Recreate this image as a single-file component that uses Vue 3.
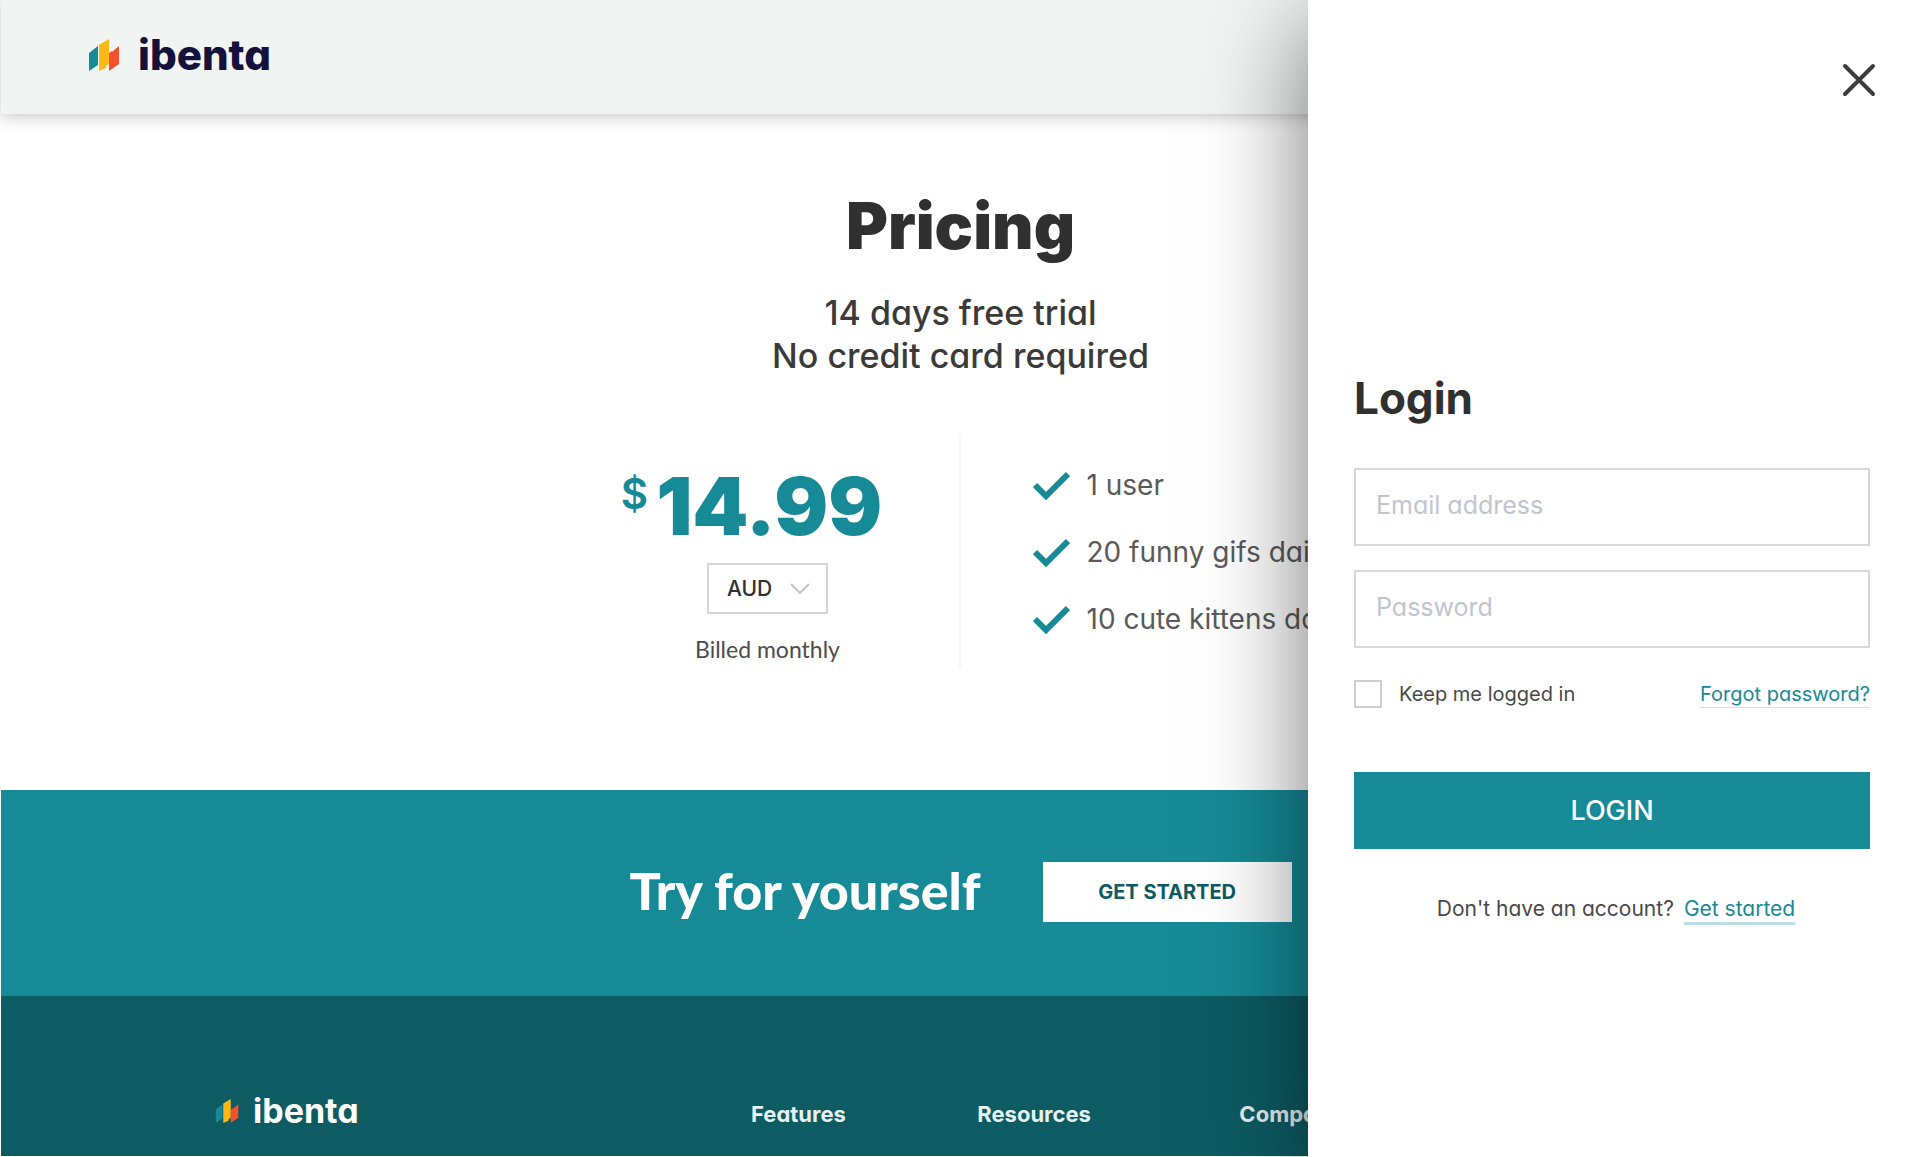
<script setup>
import { ref } from 'vue'

const email = ref('')
const password = ref('')
const keep = ref(false)
const currency = ref('AUD')
const features = ['1 user', '20 funny gifs daily', '10 cute kittens daily']
const footerLinks = ['Features', 'Resources', 'Company']
</script>

<template>
  <div class="shell">
    <div class="page">
      <header class="header">
        <a class="brand" href="#">
          <svg class="mark" viewBox="0 0 32 32" aria-hidden="true">
            <path d="M1 14 10 7v19l-9 6z" fill="#168a96" />
            <path d="M11 6 21 0v25l-3 2v2l-7 3z" fill="#fdb913" />
            <path d="M21 14l3-2v1l7-6v18l-10 7z" fill="#f4512c" />
          </svg>
          <span class="wordmark">ibenta</span>
        </a>
      </header>

      <main class="pricing">
        <h1>Pricing</h1>
        <p class="lead">14 days free trial<br />No credit card required</p>
        <div class="plan">
          <div class="cost">
            <div class="price"><span class="sign">$</span><span class="amount">14.99</span></div>
            <div class="currency">
              <select v-model="currency" aria-label="Currency">
                <option>AUD</option>
                <option>USD</option>
                <option>EUR</option>
              </select>
              <svg class="chevron" viewBox="0 0 20 12" aria-hidden="true">
                <path d="m1 1 9 9 9-9" fill="none" stroke="#c4c4c4" stroke-width="2" />
              </svg>
            </div>
            <p class="billed">Billed monthly</p>
          </div>
          <ul class="features">
            <li v-for="item in features" :key="item">
              <svg class="check" viewBox="0 0 37 29" aria-hidden="true">
                <path d="M2 14 13 25 35 3" fill="none" stroke="#168a96" stroke-width="6" />
              </svg>
              <span>{{ item }}</span>
            </li>
          </ul>
        </div>
      </main>

      <section class="cta">
        <h2>Try for yourself</h2>
        <button type="button">GET STARTED</button>
      </section>

      <footer class="footer">
        <a class="brand small" href="#">
          <svg class="mark" viewBox="0 0 32 32" aria-hidden="true">
            <path d="M1 14 10 7v19l-9 6z" fill="#168a96" />
            <path d="M11 6 21 0v25l-3 2v2l-7 3z" fill="#fdb913" />
            <path d="M21 14l3-2v1l7-6v18l-10 7z" fill="#f4512c" />
          </svg>
          <span class="wordmark">ibenta</span>
        </a>
        <a v-for="link in footerLinks" :key="link" class="footer-link" href="#">{{ link }}</a>
      </footer>
    </div>

    <aside class="panel">
      <button class="close" type="button" aria-label="Close">
        <svg viewBox="0 0 34 34" aria-hidden="true">
          <path d="M3 3 31 31M31 3 3 31" fill="none" stroke="#3c3c40" stroke-width="4" stroke-linecap="round" />
        </svg>
      </button>
      <form class="login" @submit.prevent>
        <h2>Login</h2>
        <input v-model="email" class="field" type="email" placeholder="Email address" aria-label="Email address" />
        <input v-model="password" class="field" type="password" placeholder="Password" aria-label="Password" />
        <div class="options">
          <label><input v-model="keep" type="checkbox" />Keep me logged in</label>
          <a class="forgot" href="#">Forgot password?</a>
        </div>
        <button class="submit" type="submit">LOGIN</button>
        <p class="signup">Don't have an account? <a href="#">Get started</a></p>
      </form>
    </aside>
  </div>
</template>

<style>
body {
  margin: 0;
  background: #fff;
}
</style>

<style scoped>
.shell {
  position: relative;
  display: flex;
  box-sizing: border-box;
  min-height: 100vh;
  padding: 0 0 1px 1px;
  overflow: hidden;
  color: #303030;
  font-family: Inter, "Liberation Sans", sans-serif;
  font-feature-settings: "cv11";
}
.shell * {
  box-sizing: border-box;
}
.page {
  display: flex;
  flex: 1;
  flex-direction: column;
  min-width: 0;
}
h1,
h2,
p,
ul {
  margin: 0;
  padding: 0;
}
button,
input,
select {
  border-radius: 0;
  font: inherit;
  font-feature-settings: inherit;
}

.header {
  position: relative;
  display: flex;
  align-items: center;
  height: 114px;
  padding: 0 0 4px 87px;
  background: #f0f4f3;
  box-shadow: 0 2px 16px rgba(0, 0, 0, 0.24);
}
.brand {
  display: flex;
  gap: 18px;
  align-items: center;
  color: #14123a;
  text-decoration: none;
}
.mark {
  width: 32px;
  height: 32px;
}
.wordmark {
  font-size: 42px;
  font-weight: 800;
  line-height: 48px;
}

.pricing {
  padding: 76px 0 122px;
  text-align: center;
}
h1 {
  font-size: 64px;
  font-weight: 900;
  line-height: 72px;
}
.lead {
  margin-top: 29px;
  color: #3a3a3a;
  font-size: 34px;
  font-weight: 500;
  line-height: 43px;
}
.plan {
  display: grid;
  grid-template-columns: repeat(2, minmax(0, 1fr));
  width: 768px;
  min-height: 231px;
  margin: 60px auto 0;
}
.cost {
  display: flex;
  flex-direction: column;
  align-items: center;
  padding-top: 29px;
  border-right: 2px solid #f5f5f5;
}
.price {
  display: flex;
  gap: 8px;
  padding-right: 32px;
  color: #168a96;
}
.sign {
  font-size: 42px;
  font-weight: 600;
  line-height: 56px;
}
.amount {
  font-size: 80px;
  font-weight: 900;
  line-height: 80px;
}
.currency {
  position: relative;
  margin-top: 17px;
}
.currency select {
  width: 121px;
  height: 51px;
  padding: 0 18px;
  appearance: none;
  border: 2px solid #d6d6d6;
  background: #fff;
  color: #303030;
  font-size: 21px;
  font-weight: 500;
}
.chevron {
  position: absolute;
  top: 20px;
  right: 18px;
  width: 20px;
  height: 12px;
  pointer-events: none;
}
.billed {
  margin-top: 21px;
  color: #4c4c4c;
  font-family: Lato, sans-serif;
  font-size: 23px;
  line-height: 28px;
}
.features {
  padding: 15px 0 0 72px;
  color: #5a5a5a;
  font-size: 28px;
  line-height: 67px;
  list-style: none;
  text-align: left;
  white-space: nowrap;
}
.features li {
  display: flex;
  gap: 17px;
  align-items: center;
}
.check {
  flex: none;
  width: 37px;
  height: 29px;
}

.cta {
  display: flex;
  gap: 62px;
  align-items: center;
  justify-content: center;
  padding: 72px 0 74px;
  background: #168a96;
}
.cta h2 {
  padding-bottom: 4px;
  color: #fff;
  font-family: Lato, sans-serif;
  font-size: 52px;
  font-weight: 900;
  line-height: 56px;
}
.cta button {
  width: 249px;
  height: 60px;
  border: 0;
  background: #fff;
  color: #0d5b63;
  font-size: 20px;
  font-weight: 700;
}

.footer {
  display: grid;
  flex: 1;
  grid-template-columns: 315fr 133fr 154fr 400fr;
  align-items: start;
  padding: 95px 0 0 214px;
  background: #0d5b63;
}
.small {
  gap: 14px;
  color: #fff;
}
.small .mark {
  width: 24px;
  height: 24px;
}
.small .wordmark {
  font-size: 34px;
  font-weight: 700;
  line-height: 40px;
}
.footer-link {
  color: #e6f1f2;
  font-size: 22px;
  font-weight: 700;
  line-height: 46px;
  text-decoration: none;
}

.panel {
  position: absolute;
  top: 0;
  right: 0;
  bottom: 0;
  display: flex;
  flex-direction: column;
  width: 31.875%;
  padding: 63px 50px 0 46px;
  background: #fff;
  box-shadow: 0 24px 96px rgba(0, 0, 0, 0.54);
}
.close {
  align-self: flex-end;
  width: 34px;
  height: 34px;
  margin-right: -6px;
  padding: 0;
  border: 0;
  background: none;
}
.close svg {
  display: block;
}
.login {
  display: flex;
  flex-direction: column;
  margin-top: 275px;
}
.login h2 {
  font-size: 44px;
  font-weight: 700;
  line-height: 52px;
}
.field {
  width: 100%;
  height: 78px;
  margin-top: 24px;
  padding: 0 20px 4px;
  border: 2px solid #d9d9d9;
  background: #fff;
  font-size: 25px;
}
.login h2 + .field {
  margin-top: 44px;
}
.field::placeholder {
  color: #bfc5d0;
  opacity: 1;
}
.options {
  display: flex;
  align-items: center;
  justify-content: space-between;
  margin-top: 32px;
  color: #484848;
  font-size: 20px;
  line-height: 26px;
}
.options label {
  display: flex;
  gap: 17px;
  align-items: center;
}
.options input {
  width: 28px;
  height: 28px;
  margin: 0;
  appearance: none;
  border: 2px solid #d0d0d0;
  background: #fff;
}
.options input:checked {
  background: #168a96;
}
.forgot,
.signup a {
  color: #168a96;
  text-decoration: none;
}
.forgot {
  border-bottom: 1px solid #cfe6e9;
}
.submit {
  height: 77px;
  margin-top: 64px;
  border: 0;
  background: #168a96;
  color: #fff;
  font-size: 27px;
  font-weight: 500;
}
.signup {
  display: flex;
  gap: 10px;
  justify-content: center;
  margin-top: 47px;
  padding-left: 8px;
  color: #484848;
  font-size: 21px;
  line-height: 26px;
}
.signup a {
  border-bottom: 3px solid #b9dfe5;
}
</style>
